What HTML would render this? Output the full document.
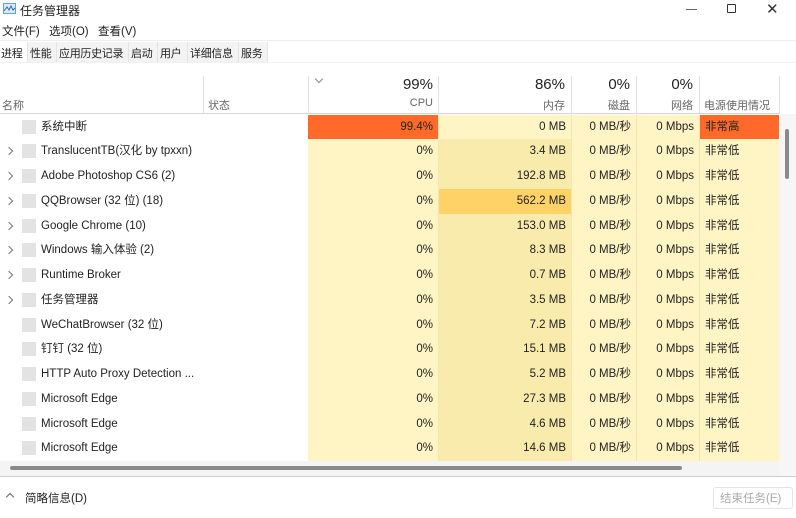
<!DOCTYPE html><html><head><meta charset="utf-8"><style>
*{margin:0;padding:0;box-sizing:border-box}
body{width:796px;height:518px;background:#fff;font-family:"Liberation Sans","Noto Sans CJK SC",sans-serif;font-size:11.5px;color:#222;position:relative;overflow:hidden}
.a{position:absolute;white-space:nowrap}
.tab{position:absolute;top:42px;height:20px;background:#f3f3f3;border-right:1px solid #e4e4e4;padding:3px 0 0 2px;font-size:11px;white-space:nowrap;overflow:hidden;letter-spacing:-0.3px}
.row{position:absolute;left:0;width:779px;height:24.75px}
.c{position:absolute;top:0;height:100%;line-height:24.75px;text-align:right;padding-right:5px}
.chev{position:absolute;left:6px;top:9px;width:6px;height:6px;border-right:1px solid #777;border-top:1px solid #777;transform:rotate(45deg)}
.ic{position:absolute;left:22px;top:5px;width:14px;height:14px;background:#e3e3e3}
.nt{position:absolute;left:41px;top:0;line-height:24.75px}
.hdr{position:absolute;color:#666;font-size:11px}
.big{position:absolute;font-size:15px;color:#222}
.vl{position:absolute;top:76px;height:38px;border-left:1px solid #e0e0e0}
</style></head><body>
<svg class="a" style="left:3px;top:3px" width="13" height="11"><rect x="0.5" y="0.5" width="12" height="10" fill="#dbeaf7" stroke="#6a9fd4"/><polyline points="1,8 4,4 6,7 8,3 10,7 12,5" fill="none" stroke="#2a6fbf"/></svg>
<div class="a" style="left:20px;top:2px;font-size:12px">任务管理器</div>
<div class="a" style="left:686px;top:9px;width:11px;border-top:1px solid #666"></div>
<div class="a" style="left:727px;top:4px;width:9px;height:9px;border:1px solid #333;border-radius:1px"></div>
<div class="a" style="left:766px;top:0px;font-size:15px;color:#333">✕</div>
<div class="a" style="left:2px;top:23px">文件(F)</div>
<div class="a" style="left:49px;top:23px">选项(O)</div>
<div class="a" style="left:98px;top:23px">查看(V)</div>
<div class="a" style="left:0;top:40px;width:796px;border-top:1px solid #eee"></div>
<div class="tab" style="left:0;width:28px;background:#fff;padding-left:1px">进程</div>
<div class="tab" style="left:28px;width:29px">性能</div>
<div class="tab" style="left:57px;width:72px">应用历史记录</div>
<div class="tab" style="left:129px;width:29px">启动</div>
<div class="tab" style="left:158px;width:30px">用户</div>
<div class="tab" style="left:188px;width:51px">详细信息</div>
<div class="tab" style="left:239px;width:29px">服务</div>
<div class="a" style="left:0;top:62px;width:796px;border-top:1px solid #f0f0f0"></div>
<div class="vl" style="left:203px"></div><div class="vl" style="left:308px"></div><div class="vl" style="left:438px"></div><div class="vl" style="left:571px"></div><div class="vl" style="left:636px"></div><div class="vl" style="left:699px"></div><div class="vl" style="left:779px"></div>
<div class="a" style="left:316px;top:76px;width:6px;height:6px;border-right:1px solid #888;border-bottom:1px solid #888;transform:rotate(45deg)"></div>
<div class="hdr" style="left:2px;top:97px">名称</div>
<div class="hdr" style="left:208px;top:97px">状态</div>
<div class="big" style="right:363px;top:76px">99%</div><div class="hdr" style="right:363px;top:97px">CPU</div>
<div class="big" style="right:231px;top:76px">86%</div><div class="hdr" style="right:231px;top:97px">内存</div>
<div class="big" style="right:166px;top:76px">0%</div><div class="hdr" style="right:166px;top:97px">磁盘</div>
<div class="big" style="right:103px;top:76px">0%</div><div class="hdr" style="right:103px;top:97px">网络</div>
<div class="hdr" style="left:704px;top:97px">电源使用情况</div>
<div class="a" style="left:0;top:113px;width:779px;border-top:1px solid #d6d6d6"></div>
<div id="rows"></div>
<div class="a" style="left:779px;top:114px;width:17px;height:362px;background:#f6f6f6"></div>
<div class="a" style="left:785px;top:129px;width:4px;height:50px;background:#8a8a8a;border-radius:2px"></div>
<div class="a" style="left:0;top:461px;width:779px;height:15px;background:#f4f4f4"></div>
<div class="a" style="left:10px;top:466px;width:672px;height:4px;background:#8a8a8a;border-radius:2px"></div>
<div class="a" style="left:0;top:476px;width:796px;border-top:1px solid #ccc"></div>
<div class="a" style="left:7px;top:494px;width:6px;height:6px;border-left:1px solid #666;border-top:1px solid #666;transform:rotate(45deg)"></div>
<div class="a" style="left:25px;top:490px">简略信息(D)</div>
<div class="a" style="left:713px;top:487px;width:80px;height:22px;border:1px solid #e4e4e4;border-radius:3px;color:#aaa;padding:2px 6px">结束任务(E)</div>
<script>
var d=[["系统中断",0,"99.4%","0 MB"],["TranslucentTB(汉化 by tpxxn)",1,"0%","3.4 MB"],["Adobe Photoshop CS6 (2)",1,"0%","192.8 MB"],["QQBrowser (32 位) (18)",1,"0%","562.2 MB"],["Google Chrome (10)",1,"0%","153.0 MB"],["Windows 输入体验 (2)",1,"0%","8.3 MB"],["Runtime Broker",1,"0%","0.7 MB"],["任务管理器",1,"0%","3.5 MB"],["WeChatBrowser (32 位)",0,"0%","7.2 MB"],["钉钉 (32 位)",0,"0%","15.1 MB"],["HTTP Auto Proxy Detection ...",0,"0%","5.2 MB"],["Microsoft Edge",0,"0%","27.3 MB"],["Microsoft Edge",0,"0%","4.6 MB"],["Microsoft Edge",0,"0%","14.6 MB"]];
var h="";d.forEach(function(r,i){var y=114.5+i*24.75;var hi=i==0;
var cpu=hi?"#ff6a2a":"#fff4c4";var mem=hi?"#fff4c4":(i==3?"#ffd267":"#f9ebab");var pw=hi?"#ff6a2a":"#fff4c4";
h+='<div class="row" style="top:'+y+'px">'+(r[1]?'<div class="chev"></div>':'')+'<div class="ic"></div><div class="nt">'+r[0]+'</div>'+
'<div class="c" style="left:308px;width:130px;background:'+cpu+'">'+r[2]+'</div>'+
'<div class="c" style="left:438px;width:133px;background:'+mem+';border-left:1px solid #f3e6b0">'+r[3]+'</div>'+
'<div class="c" style="left:571px;width:65px;background:#fff4c4;border-left:1px solid #f3e6b0">0 MB/秒</div>'+
'<div class="c" style="left:636px;width:63px;background:#fff4c4;border-left:1px solid #f3e6b0">0 Mbps</div>'+
'<div class="c" style="left:699px;width:80px;background:'+pw+';text-align:left;padding-left:5px;border-left:1px solid #f3e6b0">'+(hi?"非常高":"非常低")+'</div></div>';});
document.getElementById("rows").innerHTML=h;
</script>
</body></html>
